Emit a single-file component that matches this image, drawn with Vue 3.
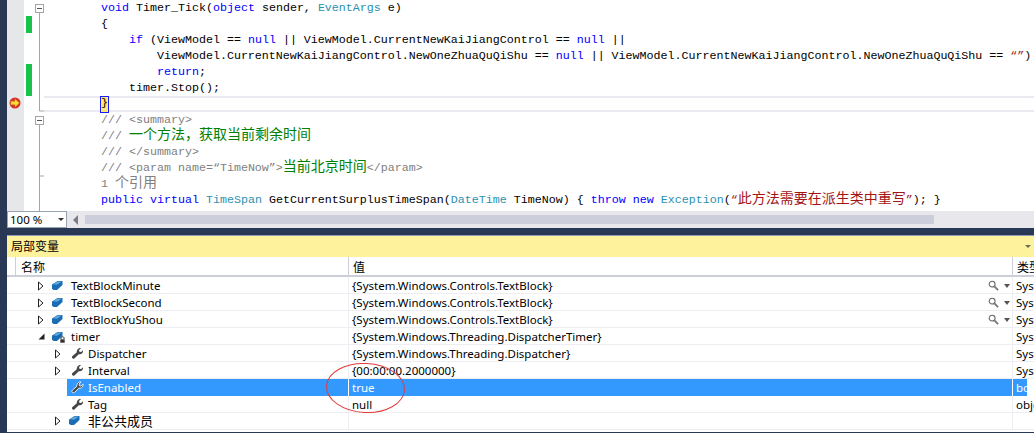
<script setup>
const sp = (n) => ' '.repeat(n)
const lines = [
  [['', sp(4)], ['kw', 'void'], ['', ' Timer_Tick('], ['kw', 'object'], ['', ' sender, '], ['ty', 'EventArgs'], ['', ' e)']],
  [['', sp(4) + '{']],
  [['', sp(8)], ['kw', 'if'], ['', ' (ViewModel == '], ['kw', 'null'], ['', ' || ViewModel.CurrentNewKaiJiangControl == '], ['kw', 'null'], ['', ' ||']],
  [['', sp(12) + 'ViewModel.CurrentNewKaiJiangControl.NewOneZhuaQuQiShu == '], ['kw', 'null'], ['', ' || ViewModel.CurrentNewKaiJiangControl.NewOneZhuaQuQiShu == '], ['st', '“”'], ['', ')']],
  [['', sp(12)], ['kw', 'return'], ['', ';']],
  [['', sp(8) + 'timer.Stop();']],
  [['', sp(4)], ['cur', '}']],
  [['', sp(4)], ['gr', '/// <summary>']],
  [['', sp(4)], ['gr', '/// '], ['gn zh', '一个方法，获取当前剩余时间']],
  [['', sp(4)], ['gr', '/// </summary>']],
  [['', sp(4)], ['gr', '/// <param name=“TimeNow”>'], ['gn zh', '当前北京时间'], ['gr', '</param>']],
  [['', sp(4)], ['gr', '1 '], ['gr zh', '个引用']],
  [['', sp(4)], ['kw', 'public'], ['', ' '], ['kw', 'virtual'], ['', ' '], ['ty', 'TimeSpan'], ['', ' GetCurrentSurplusTimeSpan('], ['ty', 'DateTime'], ['', ' TimeNow) { '], ['kw', 'throw'], ['', ' '], ['kw', 'new'], ['', ' '], ['ty', 'Exception'], ['', '('], ['st', '“'], ['st zh', '此方法需要在派生类中重写'], ['st', '”'], ['', '); }']],
  [['', '}']]
]
const rows = [
  { lvl: 0, arrow: 'open', icon: 'cube', name: 'TextBlockMinute', value: '{System.Windows.Controls.TextBlock}', type: 'Syst', lens: true },
  { lvl: 0, arrow: 'open', icon: 'cube', name: 'TextBlockSecond', value: '{System.Windows.Controls.TextBlock}', type: 'Syst', lens: true },
  { lvl: 0, arrow: 'open', icon: 'cube', name: 'TextBlockYuShou', value: '{System.Windows.Controls.TextBlock}', type: 'Syst', lens: true },
  { lvl: 0, arrow: 'down', icon: 'lock', name: 'timer', value: '{System.Windows.Threading.DispatcherTimer}', type: 'Syst' },
  { lvl: 1, arrow: 'open', icon: 'wrench', name: 'Dispatcher', value: '{System.Windows.Threading.Dispatcher}', type: 'Syst' },
  { lvl: 1, arrow: 'open', icon: 'wrench', name: 'Interval', value: '{00:00:00.2000000}', type: 'Syst' },
  { lvl: 1, arrow: '', icon: 'wrench', name: 'IsEnabled', value: 'true', type: 'bool', sel: true },
  { lvl: 1, arrow: '', icon: 'wrench', name: 'Tag', value: 'null', type: 'obje' },
  { lvl: 1, arrow: 'open', icon: 'cube', name: '非公共成员', value: '', type: '', big: true }
]
const wrenchPath = 'M11.6 1.2 9.3 3.5l.4 2 2 .4 2.2-2.2c.3 2.2-1 4.4-3.3 4.7-.6.1-1.1 0-1.6-.1L4.2 13c-.8.8-1.9.8-2.6.1-.7-.7-.7-1.8.1-2.6L6.7 6.2C6.2 3.6 8.6.4 11.6 1.2Z'
</script>

<template>
  <div class="root">
    <section class="editor">
      <div class="body">
        <div class="margin"></div>
        <svg class="gutter" width="49" height="211" viewBox="0 0 49 211">
          <rect x="2" y="16" width="6" height="17" fill="#19c24a" />
          <rect x="2" y="64" width="6" height="32" fill="#19c24a" />
          <path d="M15.5 13V111H20M15.5 125V176H20M15.5 176V211" fill="none" stroke="#a5a5a5" />
          <rect x="11.5" y="4.5" width="8" height="8" fill="#fff" stroke="#a5a5a5" />
          <path d="M13 8.5h5" stroke="#555" />
          <rect x="11.5" y="116.5" width="8" height="8" fill="#fff" stroke="#a5a5a5" />
          <path d="M13 120.5h5" stroke="#555" />
        </svg>
        <div class="code">
          <div v-for="(line, i) in lines" :key="i" class="line" :class="{ active: i === 6 }">
            <span v-for="(t, j) in line" :key="j" :class="t[0]">{{ t[1] }}</span>
          </div>
        </div>
        <svg class="bp" width="12" height="12" viewBox="0 0 12 12">
          <circle cx="6" cy="6" r="5.5" fill="#d8302a" />
          <path d="M1.8 4.2H6V1.8L10.4 6 6 10.2V7.8H1.8Z" fill="#ffdb3a" stroke="#b88a10" stroke-width=".5" />
        </svg>
      </div>
      <div class="hbar">
        <div class="zoom"><span>100 %</span><i class="tri"></i></div>
        <div class="scroll">
          <i class="left"></i>
          <div class="thumb"></div>
        </div>
      </div>
    </section>

    <section class="panel">
      <header class="title"><span>局部变量</span><i class="tri small"></i></header>
      <div class="grid head">
        <div class="c name"><span>名称</span></div>
        <div class="c val"><span>值</span></div>
        <div class="c typ"><span>类型</span></div>
      </div>
      <div v-for="r in rows" :key="r.name" class="grid row" :class="{ sel: r.sel }">
        <div class="c name" :class="'lvl' + r.lvl">
          <span class="arrow">
            <svg v-if="r.arrow === 'open'" width="6" height="10" viewBox="0 0 6 10"><path d="M.5 1 5 5 .5 9Z" fill="#fff" stroke="#222" /></svg>
            <svg v-else-if="r.arrow === 'down'" width="7" height="7" viewBox="0 0 7 7"><path d="M6.5 .5V6.5H.5Z" fill="#222" /></svg>
          </span>
          <span class="icon" :class="{ iw: r.icon === 'wrench' }">
            <svg v-if="r.icon === 'wrench'" width="13" height="13" viewBox="0 0 15 15">
              <path :d="wrenchPath" fill="#474747" :stroke="r.sel ? '#fff' : 'none'" />
            </svg>
            <svg v-else width="15" height="14" viewBox="0 0 15 14">
              <path d="M1 5.5 6.5 2 11.5 2V6L6 11H2.5L1 9.5Z" fill="#1a6cb4" />
              <path d="M1.8 5.2 6.6 2.6H10.8L6 5.8Z" fill="#5fa8de" />
              <template v-if="r.icon === 'lock'">
                <rect x="9" y="9" width="5" height="4" fill="#333" stroke="#fff" stroke-width=".6" />
                <path d="M10 9V7.5C10 6.5 13 6.5 13 7.5V9" fill="none" stroke="#333" />
              </template>
            </svg>
          </span>
          <span class="label" :class="{ big: r.big }">{{ r.name }}</span>
        </div>
        <div class="c val">
          <span>{{ r.value }}</span>
          <span v-if="r.lens" class="lens">
            <svg width="11" height="11" viewBox="0 0 12 12"><circle cx="4.5" cy="4.5" r="3.2" fill="#fff" stroke="#666" stroke-width="1.2" /><path d="M7 7 11 11" stroke="#777" stroke-width="2" /></svg>
            <i class="tri dark"></i>
          </span>
        </div>
        <div class="c typ"><span>{{ r.type }}</span></div>
      </div>
    </section>

    <svg class="mark" width="90" height="60" viewBox="0 0 90 60">
      <ellipse cx="44.5" cy="30" rx="39" ry="24.5" fill="none" stroke="#e23a3a" transform="rotate(3 44.5 30)" />
    </svg>
  </div>
</template>

<style>
html, body { margin: 0; background: #293955; }
</style>

<style scoped>
.root {
  position: relative;
  width: 1034px;
  height: 433px;
  overflow: hidden;
  background: #293955;
  padding-left: 7px;
  box-sizing: border-box;
  display: flex;
  flex-direction: column;
}
.editor { height: 228px; flex: none; display: flex; flex-direction: column; background: #fff; }
.body { position: relative; height: 211px; display: flex; overflow: hidden; flex: none; }
.margin { width: 17px; flex: none; background: #e6e7e8; }
.gutter { flex: none; width: 49px; }
.bp { position: absolute; left: 2px; top: 97px; }
.code {
  flex: 1;
  min-width: 0;
  font: 11.67px/16px "Liberation Mono", "Noto Sans CJK SC", monospace;
  color: #000;
}
.line { height: 16px; white-space: pre; }
.line.active {
  margin-left: -29px;
  padding-left: 29px;
  height: 12px;
  line-height: 12px;
  border: solid #eaeaf2;
  border-width: 2px 0;
}
.kw { color: #0000ff; }
.ty { color: #2b91af; }
.gr { color: #808080; }
.gn { color: #008000; }
.st { color: #a31515; }
.zh { font-family: "Noto Sans CJK SC", sans-serif; font-size: 14px; line-height: 0; }
.cur {
  display: inline-block;
  width: 7px;
  height: 15px;
  margin-top: -1px;
  background: #ffe873;
  outline: 1px solid #1a1aff;
  line-height: 13px;
  vertical-align: top;
}
.hbar { height: 17px; display: flex; background: #e8e8ec; flex: none; }
.zoom {
  width: 60px;
  box-sizing: border-box;
  flex: none;
  background: #fff;
  border: 1px solid #9aa3b5;
  font: 11.5px/15px "Noto Sans", sans-serif;
  display: flex;
  align-items: center;
  justify-content: space-between;
  padding: 0 2px;
}
.tri { width: 0; height: 0; border: 3px solid transparent; border-top: 3px solid #333; border-bottom: 0; display: block; }
.scroll { flex: 1; display: flex; align-items: center; padding: 0 100px 0 5px; }
.left { width: 0; height: 0; border: 5px solid transparent; border-right: 5px solid #7a7a88; border-left: 0; margin: 0 7px 0 1px; flex: none; }
.thumb { flex: 1; height: 9px; background: #cccedb; }

.panel {
  margin-top: 7px;
  height: 196px;
  flex: none;
  background: #fff;
  border-top: 1px solid #8e9bbc;
  font: 11.5px/17px "Noto Sans", "Noto Sans CJK SC", sans-serif;
  color: #000;
}
.title { height: 21px; font-size: 12px; background: #fff29d; display: flex; align-items: center; justify-content: space-between; padding: 0 3px 0 4px; }
.tri.small { border-top-color: #6a6a55; }
.grid { display: grid; grid-template-columns: 341px 664px 15px; }
.head { height: 18px; font-size: 12px; border-bottom: 2px solid #ccced8; }
.head .c { padding-top: 2px; box-sizing: border-box; }
.head .name { padding-left: 5px; margin-left: 8px; border-left: 1px solid #ccced8; }
.head .val, .head .typ { padding-left: 4px; border-left: 1px solid #ccced8; }
.row { height: 17px; box-sizing: border-box; border-bottom: 1px solid #eeeef2; }
.c { white-space: nowrap; overflow: hidden; min-width: 0; display: flex; align-items: center; height: 100%; }
.c.typ { overflow: visible; }
.row .val, .row .typ { border-left: 1px solid #eeeef2; padding-left: 3px; box-sizing: border-box; }
.row .val { justify-content: space-between; padding-right: 2px; }
.lvl0 { padding-left: 31px; }
.lvl1 { padding-left: 48px; }
.arrow { width: 13px; flex: none; display: flex; align-items: center; }
.icon { flex: none; width: 20px; box-sizing: border-box; display: flex; align-items: center; }
.iw { padding-left: 3px; }
.big { font-size: 13px; }
.sel .name { background: linear-gradient(to right, #fff 60px, #3399ff 60px); color: #fff; }
.sel .val, .sel .typ { background: #3399ff; color: #fff; border-left: 1px solid #fff; }
.row.sel { border-bottom-color: #fff; }
.lens { display: flex; align-items: center; gap: 5px; }
.tri.dark { border-top-color: #555; border-width: 4px 3px 0; }
.mark { position: absolute; left: 321px; top: 358px; }
</style>
